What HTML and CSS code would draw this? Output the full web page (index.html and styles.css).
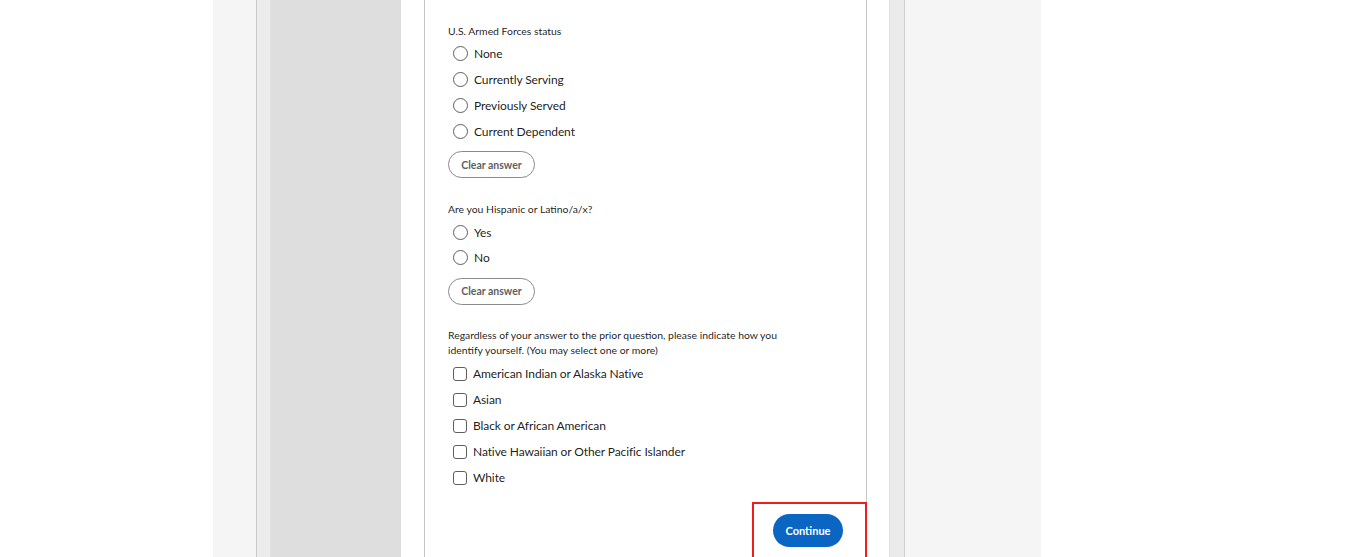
FILE: index.html
```html
<!DOCTYPE html>
<html lang="en">
<head>
<meta charset="utf-8">
<title>Voluntary self identification</title>
<link rel="stylesheet" href="styles.css">
</head>
<body>
<div class="page">
  <div class="frame">
    <div class="strip-a"></div>
    <div class="strip-b"></div>
    <div class="main">
      <div class="card">
        <section class="question">
          <p class="q-title">U.S. Armed Forces status</p>
          <div class="options">
            <label class="option"><span class="radio"></span><span>None</span></label>
            <label class="option"><span class="radio"></span><span>Currently Serving</span></label>
            <label class="option"><span class="radio"></span><span>Previously Served</span></label>
            <label class="option"><span class="radio"></span><span>Current Dependent</span></label>
          </div>
          <button class="clear-btn" type="button">Clear answer</button>
        </section>
        <section class="question">
          <p class="q-title">Are you Hispanic or Latino/a/x?</p>
          <div class="options">
            <label class="option"><span class="radio"></span><span>Yes</span></label>
            <label class="option"><span class="radio"></span><span>No</span></label>
          </div>
          <button class="clear-btn" type="button">Clear answer</button>
        </section>
        <section class="question">
          <p class="q-title multi">Regardless of your answer to the prior question, please indicate how you identify yourself. (You may select one or more)</p>
          <div class="options checks">
            <label class="option tall"><span class="check"></span><span>American Indian or Alaska Native</span></label>
            <label class="option tall"><span class="check"></span><span>Asian</span></label>
            <label class="option tall"><span class="check"></span><span>Black or African American</span></label>
            <label class="option tall"><span class="check"></span><span>Native Hawaiian or Other Pacific Islander</span></label>
            <label class="option tall"><span class="check"></span><span>White</span></label>
          </div>
        </section>
        <div class="footer">
          <button class="continue-btn" type="button">Continue</button>
          <div class="highlight"></div>
        </div>
      </div>
    </div>
    <div class="strip-c"></div>
  </div>
</div>
</body>
</html>
```
FILE: styles.css
```css
html, body {
  margin: 0;
  padding: 0;
  background: #ffffff;
  height: 100%;
  overflow: hidden;
}
body {
  font-family: "Lato", "Liberation Sans", sans-serif;
  color: rgba(0, 0, 0, 0.9);
}
.page {
  margin-left: 213px;
  width: 828px;
  height: 557px;
  background: #f5f5f5;
  padding-left: 43px;
  box-sizing: border-box;
  display: flex;
}
.frame {
  display: flex;
  height: 100%;
  border-left: 1px solid #c9c9c9;
  border-right: 1px solid #cfcfcf;
}
.strip-a {
  width: 14px;
  background: #ececec;
  border-right: 1px solid #e2e2e2;
  box-sizing: border-box;
}
.strip-b {
  width: 130px;
  background: #dedede;
}
.main {
  width: 488px;
  background: #ffffff;
  padding-left: 23px;
  box-sizing: border-box;
  display: flex;
}
.strip-c {
  width: 15px;
  background: #ebebeb;
  border-left: 1px solid #e0e0e0;
  box-sizing: border-box;
}
.card {
  width: 443px;
  border-left: 1px solid #c4c4c4;
  border-right: 1px solid #c4c4c4;
  box-sizing: border-box;
  padding: 23px 23px 0 23px;
  display: flex;
  flex-direction: column;
  gap: 23px;
}
.question {
  display: flex;
  flex-direction: column;
  align-items: flex-start;
}
.q-title {
  margin: 0 0 2px 0;
  font-size: 10.4px;
  line-height: 16px;
  color: rgba(0, 0, 0, 0.9);
}
.q-title.multi {
  line-height: 15px;
  width: 340px;
  margin-bottom: 3px;
}
.options {
  display: flex;
  flex-direction: column;
}
.option {
  height: 25.8px;
  display: flex;
  align-items: center;
  gap: 6px;
  padding-left: 5px;
  font-size: 12px;
  letter-spacing: -0.1px;
  color: rgba(0, 0, 0, 0.9);
}
.option.tall {
  height: 26px;
}
.radio {
  width: 15px;
  height: 15px;
  border: 1.3px solid #5e5e5e;
  border-radius: 50%;
  box-sizing: border-box;
  flex: none;
}
.check {
  width: 14px;
  height: 14px;
  border: 1.3px solid #5e5e5e;
  border-radius: 3px;
  box-sizing: border-box;
  flex: none;
}
.clear-btn {
  margin-top: 7px;
  height: 27px;
  width: 87px;
  border: 1.3px solid #8a8a8a;
  border-radius: 14px;
  background: #ffffff;
  font-family: "Lato", "Liberation Sans", sans-serif;
  font-size: 10.5px;
  font-weight: 700;
  color: #5f5f5f;
  padding: 0;
}
.footer {
  position: relative;
  display: flex;
  justify-content: flex-end;
}
.continue-btn {
  width: 70px;
  height: 33px;
  border: none;
  border-radius: 17px;
  background: #0a66c2;
  color: #ffffff;
  font-family: "Lato", "Liberation Sans", sans-serif;
  font-size: 11px;
  font-weight: 700;
  padding: 0;
}
.highlight {
  position: absolute;
  left: 304px;
  top: -12px;
  width: 115px;
  height: 70px;
  border: 2px solid #ee1c1c;
  box-sizing: border-box;
}
```
